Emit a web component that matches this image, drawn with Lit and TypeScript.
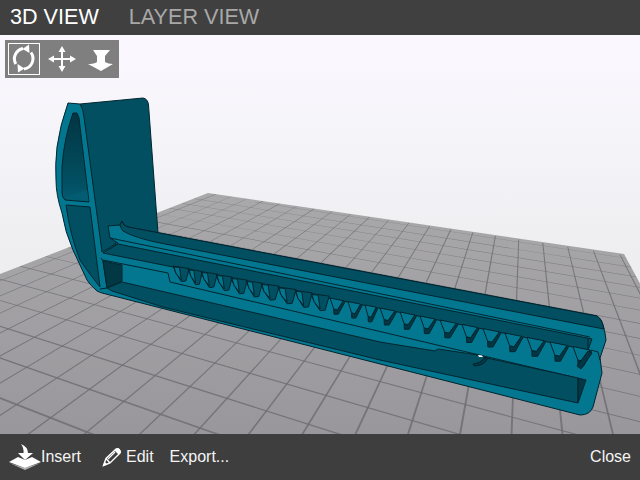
import { LitElement, html, css, svg } from "lit";
import { customElement } from "lit/decorators.js";

const A = -0.0303, B = 0.0794;
const VA = [-980, 15], VB = [525, 70], O = [57, 378];
const proj = (u: number, v: number) => {
  const a = A * u, b = B * v, w = a + b + 1;
  return [(a * VA[0] + b * VB[0] + O[0]) / w, (a * VA[1] + b * VB[1] + O[1]) / w];
};
const quad = (u0: number, v0: number, u1: number, v1: number, du: number, dv: number) =>
  [proj(u0 - du, v0 - dv), proj(u1 - du, v1 - dv), proj(u1 + du, v1 + dv), proj(u0 + du, v0 + dv)]
    .map((p) => p.map((n) => n.toFixed(1)).join(",")).join(" ");

const LW = 0.02;
const gridLines: string[] = [];
for (let u = -6; u <= 14; u++) gridLines.push(quad(u, -3.5, u, 15.35, LW, 0));
for (let v = -3; v <= 15; v++) gridLines.push(quad(-6.5, v, 14.2, v, 0, LW));

const toothX = [175, 190, 203, 218, 233, 248, 263, 280, 297, 313, 330, 348, 365, 380, 400, 420, 440, 462, 483, 505, 527, 550, 573];
const pts = (a: number[][]) => a.map((p) => p.map((n) => n.toFixed(1)).join(",")).join(" ");
const teeth = toothX.map((x, i) => {
  const t = i / (toothX.length - 1);
  const next = toothX[i + 1] ?? x + 23;
  const sp = next - x;
  const y = 264 + 0.2 * (x - 160);
  if (t <= 0.42) {
    const h = 14 + 4 * t;
    const outer = [[x - 2, y - 1], [x + sp * 0.95, y + 1.5], [x + sp * 0.72, y + h], [x + sp * 0.42, y + h + 0.5], [x + 1, y + h * 0.45]];
    const lit = [[x - 1, y], [x + sp * 0.3, y + 0.5], [x + sp * 0.42, y + h * 0.92], [x + 1, y + h * 0.45]];
    return { a: pts(outer), b: pts(lit), aCls: "dark b", bCls: "light b" };
  }
  const w = sp * 0.74;
  const h = 15 + 6 * (t - 0.42);
  const face = [[x, y], [x + w, y + 0.2 * w], [x + w * 0.55, y + h * 0.78], [x + w * 0.28, y + h * 0.72]];
  const side = [[x + w, y + 0.2 * w], [x + w + 1.5, y + 0.2 * w + 1.5], [x + w * 0.62, y + h + 1], [x + w * 0.3, y + h + 1], [x + w * 0.28, y + h * 0.72], [x + w * 0.55, y + h * 0.78]];
  return { a: pts(side), b: pts(face), aCls: "darker b", bCls: "light b" };
});

@customElement("app-root")
export class AppRoot extends LitElement {
  static styles = css`
    :host { display: block; width: 640px; height: 480px; font-family: "Liberation Sans", Arial, sans-serif; }
    .app { position: relative; display: flex; flex-direction: column; width: 640px; height: 480px; overflow: hidden; }
    .top { flex: 0 0 35px; background: #404040; display: flex; align-items: center; gap: 30px; padding: 0 10px 1px; font-size: 21.6px; color: #fff; box-sizing: border-box; }
    .inactive { color: #a8a8a8; }
    .view { flex: 1; position: relative; background: linear-gradient(#fbf9ff, #eeeef1 55%); }
    .scene { display: block; width: 640px; height: 399px; }
    .tools { position: absolute; left: 5px; top: 5px; width: 114px; height: 38px; background: #7f7f7f; }
    .tools svg { display: block; }
    .bottom { flex: 0 0 46px; background: #3e3e3e; color: #f4f4f4; font-size: 16px; display: flex; align-items: center; padding: 0 9px; box-sizing: border-box; }
    .item { display: flex; align-items: center; }
    .ins { margin-right: 20px; }
    .edit { margin-right: 16px; }
    .ed-ic { margin-right: 4px; }
    .close { margin-left: auto; }
    .icn { display: block; flex: none; }
    .floor { fill: url(#fl); }
    .gl { fill: #6f6f73; fill-opacity: 0.85; }
    .gridwrap { filter: url(#soft); }
    .b { stroke: #01252f; stroke-width: 1; stroke-linejoin: round; }
    .light { fill: #03778f; }
    .dark { fill: #024f62; }
    .mid { fill: #035c72; }
    .darker { fill: #023744; }
    .cav { fill: url(#cav); }
    .ln { fill: none; stroke: #01252f; stroke-width: 1; }
    .wh { fill: #fff; }
    .wl { fill: none; stroke: #fff; }
    .shadow { fill: #b5b5b5; }
  `;

  render() {
    return html`<div class="app">
      <div class="top"><span>3D VIEW</span><span class="inactive">LAYER VIEW</span></div>
      <div class="view">
        <svg class="scene" viewBox="0 35 640 399">
          <defs>
            <linearGradient id="fl" x1="0" y1="193" x2="0" y2="434" gradientUnits="userSpaceOnUse">
              <stop offset="0" stop-color="#a9a8ab"></stop><stop offset="1" stop-color="#99979b"></stop>
            </linearGradient>
            <linearGradient id="cav" x1="0" y1="110" x2="0" y2="200" gradientUnits="userSpaceOnUse">
              <stop offset="0" stop-color="#023440"></stop><stop offset="0.8" stop-color="#024f62"></stop><stop offset="1" stop-color="#045a70"></stop>
            </linearGradient>
            <filter id="soft" x="-5%" y="-5%" width="110%" height="110%"><feGaussianBlur stdDeviation="0.6"></feGaussianBlur></filter>
            <clipPath id="fc"><polygon points="208,193 624,254 700,394 700,440 -10,440 -10,278"></polygon></clipPath>
          </defs>
          <polygon class="floor" points="208,193 624,254 700,394 700,440 -10,440 -10,278"></polygon>
          <g clip-path="url(#fc)"><g class="gridwrap">${gridLines.map((p) => svg`<polygon class="gl" points=${p}></polygon>`)}</g></g>

          <!-- back wall -->
          <path class="dark b" d="M80 104 L143 98 Q148 99 148.5 105 L158.500 240 L120 240 L102 254 L83 117 Z"></path>

          <!-- main body silhouette -->
          <path class="light b" d="M68 103 L80 104 Q83 108 84 117 L102 252 L118 243 L110 238 L108 226 L120 225 L122 221 Q123 226 128 227 L597 316 Q602 319 603 325 L605 333 L606 340 L600 358 L602 373 L593 407 Q590 415 580 415 L102 293 Q99 292 97 291 Q90 285 87 280 L73 250 Q65 232 62 213 Q56 195 56 180 Q55 165 57 147 Q60 125 68 103 Z"></path>

          <!-- cap cavities -->
          <path class="cav b" d="M73 113 L77 113 Q78 115 79 118 L89 202 L65 200 Q62 197 62 193 L62 167 Q64 138 73 113 Z"></path>
          <path class="mid" d="M66 197 L87 190 L88.500 201 L66 199 Z"></path>
          <path class="dark b" d="M66 205 L90 207 L100 287 Q90 275 80 260 Q70 235 66 205 Z"></path>

          <!-- top band -->
          <path class="dark b" d="M122 221 Q123 226 128 227 L597 316 Q602 319 604 329 L160 243 Q135 238 123 231 Q120 227 120 225 Z"></path>
          <path class="ln" d="M110 238 L590 337"></path>

          <!-- toothed channel -->
          <path class="dark b" d="M118 244 L592 339 L588 350 L103 253 Z"></path>
          <path class="ln" d="M103 260 L168 273 L170 282 L577 378"></path>

          ${teeth.map((t) => svg`
            <polygon class=${t.aCls} points=${t.a}></polygon>
            <polygon class=${t.bCls} points=${t.b}></polygon>
          `)}

          <!-- lower channel -->
          <path class="dark b" d="M122 282 L380 342 L435 351 L438 349 L478 355 L487 358 L578 378 L578 403 L380 360 L163 307 L112 291 L107 288 Z"></path>
          <path class="darker b" d="M103 261 L122 265 L122 281 L107 288 Z"></path>
          <path class="darker b" d="M578 378 L586 380 L578 403 Z"></path>
          <path class="ln" d="M101 258 L103 261 L107 288 L100 289"></path>
          <path class="darker b" d="M473 364 Q481 363 484 358 L488 358 Q484 366 474 366 Z"></path>
          <path class="wh" d="M478 355 L482 355.500 L483 357 L479 357 Z"></path>

          <!-- right end details -->
          <path class="ln" d="M591 350 L598 352 L600 360 M588 338 L588 350"></path>
          <path class="darker b" d="M588 351 L592 353 L581 369 L577 366 Z"></path>
        </svg>
        <div class="tools">
          <svg width="114" height="38" viewBox="5 40 114 38">
            <rect class="wl" x="8.500" y="43.500" width="31" height="31"></rect>
            <path class="wl" stroke-width="3" d="M23 48.500 A10.500 10.500 0 0 0 15.800 64 M31 52.500 A10.500 10.500 0 0 1 24 69"></path>
            <path class="wh" d="M22.500 49 L29 44.500 L29.500 53 Z M24.500 68.500 L18 72.500 L17.500 64 Z"></path>
            <path class="wl" stroke-width="2" d="M62 49 V69 M51 59 H73"></path>
            <path class="wh" d="M62 46 L65.500 52 H58.500 Z M62 72 L58.500 66 H65.500 Z M48 59 L54 55.500 V62.500 Z M76 59 L70 55.500 V62.500 Z"></path>
            <path class="wh" d="M93 50 H110 L105 56 V62 Q108 64 113 64 L101 71 L88 64 Q94 64 97 62 V56 Z"></path>
          </svg>
        </div>
      </div>
      <div class="bottom">
        <div class="item ins">
          <svg class="icn" width="32" height="30" viewBox="9 442 32 30">
            <path class="shadow" d="M9.500 463 L25 470 L40.500 463 L25 468 Z"></path>
            <path class="wh" d="M9 462 L18 457 L25 460 L32 457 L41 462 L25 468 Z"></path>
            <path class="wh" d="M21 444 Q28 447 28 453 L33 453 L25 460 L18 453 L23.500 453 Q24 448 21 444 Z"></path>
          </svg>
          <span>Insert</span>
        </div>
        <div class="item edit">
          <svg class="icn ed-ic" width="21" height="22" viewBox="100 446 21 22">
            <path class="wl" stroke-width="1.400" d="M102.500 465.500 L105 458.500 L115 449 Q116.500 448 118 449.500 Q120 451.500 119 453 L109 463 Z M105 458.500 L109 463"></path>
            <path class="wh" d="M102 466 L103.500 461.500 L106.500 464.500 Z M113.500 450.500 L115.500 448.500 Q117 447.500 118.500 449 Q120 450.500 119.500 452.500 L117.500 454.500 Z"></path>
            <path class="wl" stroke-width="1.200" d="M107 459 L114 452"></path>
          </svg>
          <span>Edit</span>
        </div>
        <div class="item">Export...</div>
        <div class="item close">Close</div>
      </div>
    </div>`;
  }
}
